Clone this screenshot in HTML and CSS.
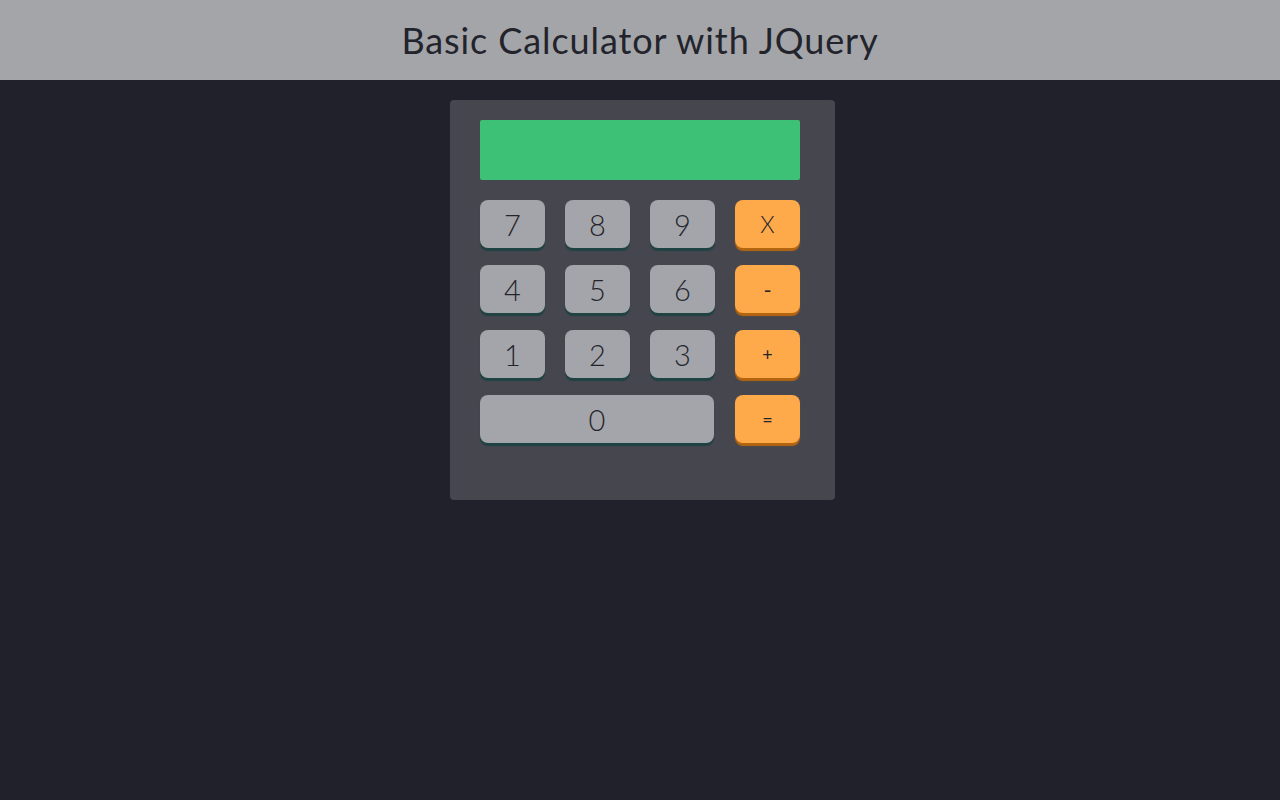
FILE: index.html
```html
<!DOCTYPE html>
<html>
<head>
<meta charset="utf-8">
<link rel="stylesheet" href="styles.css">
</head>
<body>
<header class="top">
  <h1 class="title">Basic Calculator with JQuery</h1>
</header>
<main class="stage">
  <div class="calc">
    <div class="screen"></div>
    <div class="keys">
      <button class="key num">7</button>
      <button class="key num">8</button>
      <button class="key num">9</button>
      <button class="key op op-x">X</button>
      <button class="key num">4</button>
      <button class="key num">5</button>
      <button class="key num">6</button>
      <button class="key op op-minus">-</button>
      <button class="key num">1</button>
      <button class="key num">2</button>
      <button class="key num">3</button>
      <button class="key op">+</button>
      <button class="key num zero">0</button>
      <button class="key op">=</button>
    </div>
  </div>
</main>
</body>
</html>
```
FILE: styles.css
```css
html, body {
  margin: 0;
  padding: 0;
}
body {
  background: #21212b;
  font-family: "Lato", "Open Sans", sans-serif;
  min-height: 800px;
}
.top {
  height: 80px;
  background: #a4a5a9;
  display: flex;
  align-items: center;
  justify-content: center;
}
.title {
  margin: 0;
  font-weight: 400;
  font-size: 36px;
  color: #22232b;
  letter-spacing: 0.9px;
  padding-bottom: 1px;
}
.stage {
  display: flex;
  justify-content: center;
  padding: 20px 0 0 5px;
}
.calc {
  width: 385px;
  height: 400px;
  box-sizing: border-box;
  background: #46464f;
  border-radius: 4px;
  padding: 20px 35px 0 30px;
}
.screen {
  height: 60px;
  background: #3cc177;
  border-radius: 2px;
}
.keys {
  margin-top: 20px;
  display: grid;
  grid-template-columns: repeat(4, 65px);
  grid-auto-rows: 48px;
  column-gap: 20px;
  row-gap: 17px;
}
.key {
  border: none;
  border-radius: 8px;
  padding: 0;
  font-family: "Lato", "Open Sans", sans-serif;
  color: #24252c;
  cursor: pointer;
}
.num {
  background: #a4a5aa;
  font-size: 29px;
  font-weight: 300;
  box-shadow: 0 3px 1px #1f4242;
}
.op {
  background: #ffaa4a;
  font-size: 18px;
  box-shadow: 0 3px 1px #b4650f;
}
.op-x {
  font-size: 23px;
  font-weight: 300;
}
.op-minus {
  font-size: 22px;
}
.zero {
  grid-column: span 3;
  width: 234px;
}
```
